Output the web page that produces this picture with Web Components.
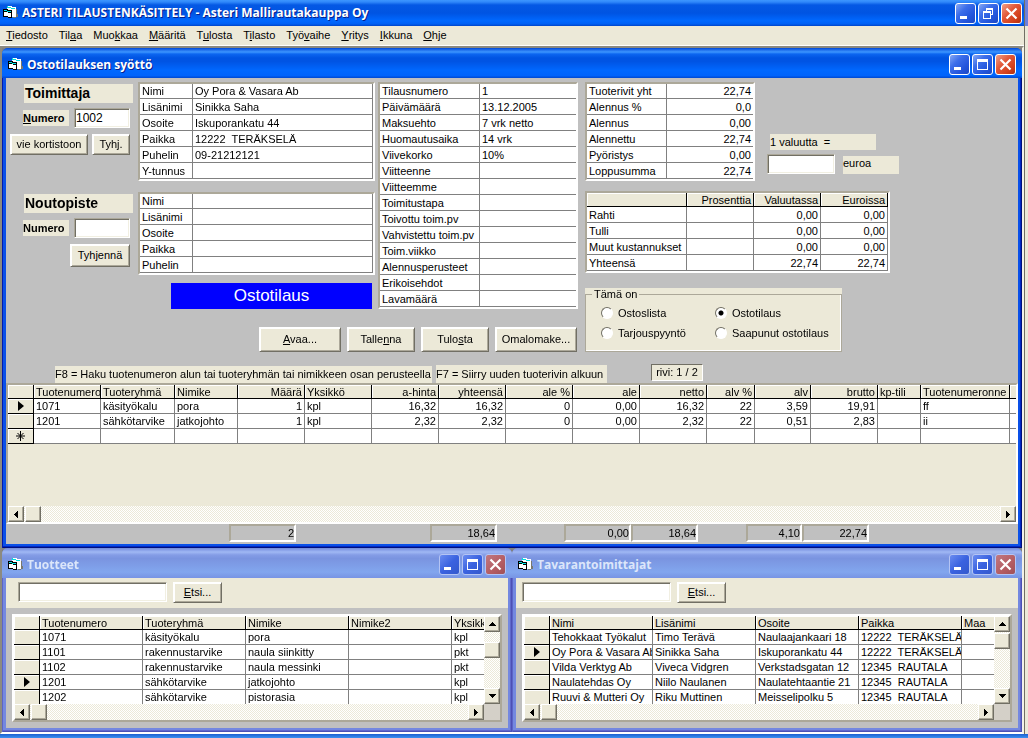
<!DOCTYPE html>
<html lang="fi">
<head>
<meta charset="utf-8">
<title>ASTERI TILAUSTENKÄSITTELY - Asteri Mallirautakauppa Oy</title>
<style>
html, body { margin: 0; height: 100%; }
body {
  font: 11px/13px "Liberation Sans", Arial, sans-serif;
  color: #000;
  background: #ece9d8;
  overflow: hidden;
  --face: #ece9d8;
  --shade: #aca899;
  --dark: #716f64;
  --line: #808080;
  --gray: #c0c0c0;
}
</style>
</head>
<body>
<asteri-app></asteri-app>
<script>
const DATA = {
  supplier: [["Nimi", "Oy Pora & Vasara Ab"], ["Lisänimi", "Sinikka Saha"], ["Osoite", "Iskuporankatu 44"], ["Paikka", "12222  TERÄKSELÄ"], ["Puhelin", "09-21212121"], ["Y-tunnus", ""]],
  pickup: [["Nimi", ""], ["Lisänimi", ""], ["Osoite", ""], ["Paikka", ""], ["Puhelin", ""]],
  order: [["Tilausnumero", "1"], ["Päivämäärä", "13.12.2005"], ["Maksuehto", "7 vrk netto"], ["Huomautusaika", "14 vrk"], ["Viivekorko", "10%"], ["Viitteenne", ""], ["Viitteemme", ""], ["Toimitustapa", ""], ["Toivottu toim.pv", ""], ["Vahvistettu toim.pv", ""], ["Toim.viikko", ""], ["Alennusperusteet", ""], ["Erikoisehdot", ""], ["Lavamäärä", ""]],
  totals: [["Tuoterivit yht", "22,74"], ["Alennus %", "0,0"], ["Alennus", "0,00"], ["Alennettu", "22,74"], ["Pyöristys", "0,00"], ["Loppusumma", "22,74"]]
};

const GRIDS = {
  costs: {
    selector: false,
    cols: [["", 100], ["Prosenttia", 67, "r"], ["Valuutassa", 67, "r"], ["Euroissa", 67, "r"]],
    rows: [["Rahti", "", "0,00", "0,00"], ["Tulli", "", "0,00", "0,00"], ["Muut kustannukset", "", "0,00", "0,00"], ["Yhteensä", "", "22,74", "22,74"]]
  },
  lines: {
    selector: true, current: 0, append: true,
    cols: [["Tuotenumero", 67], ["Tuoteryhmä", 74], ["Nimike", 63], ["Määrä", 67, "r"], ["Yksikkö", 67], ["a-hinta", 67, "r"], ["yhteensä", 67, "r"], ["ale %", 67, "r"], ["ale", 67, "r"], ["netto", 67, "r"], ["alv %", 48, "r"], ["alv", 56, "r"], ["brutto", 67, "r"], ["kp-tili", 43], ["Tuotenumeronne", 89], ["", 0]],
    rows: [
      ["1071", "käsityökalu", "pora", "1", "kpl", "16,32", "16,32", "0", "0,00", "16,32", "22", "3,59", "19,91", "", "ff", ""],
      ["1201", "sähkötarvike", "jatkojohto", "1", "kpl", "2,32", "2,32", "0", "0,00", "2,32", "22", "0,51", "2,83", "", "ii", ""]
    ]
  },
  products: {
    selector: true, current: 3,
    cols: [["Tuotenumero", 103], ["Tuoteryhmä", 103], ["Nimike", 103], ["Nimike2", 103], ["Yksikkö", 0]],
    rows: [["1071", "käsityökalu", "pora", "", "kpl"], ["1101", "rakennustarvike", "naula siinkitty", "", "pkt"], ["1102", "rakennustarvike", "naula messinki", "", "pkt"], ["1201", "sähkötarvike", "jatkojohto", "", "kpl"], ["1202", "sähkötarvike", "pistorasia", "", "kpl"]]
  },
  suppliers: {
    selector: true, current: 1,
    cols: [["Nimi", 103], ["Lisänimi", 103], ["Osoite", 103], ["Paikka", 103], ["Maa", 0]],
    rows: [["Tehokkaat Työkalut", "Timo Terävä", "Naulaajankaari 18", "12222  TERÄKSELÄ", ""], ["Oy Pora & Vasara Ab", "Sinikka Saha", "Iskuporankatu 44", "12222  TERÄKSELÄ", ""], ["Vilda Verktyg Ab", "Viveca Vidgren", "Verkstadsgatan 12", "12345  RAUTALA", ""], ["Naulatehdas Oy", "Niilo Naulanen", "Naulatehtaantie 21", "12345  RAUTALA", ""], ["Ruuvi & Mutteri Oy", "Riku Muttinen", "Meisselipolku 5", "12345  RAUTALA", ""]]
  }
};

const esc = s => s.replace(/&/g, "&amp;");

const FIELD_CSS = `
  input[type=text] {
    box-sizing: border-box; margin: 0; height: 20px; padding: 0 1px; font: inherit; font-size: 12px; color: #000;
    background: #fff; border: 1px solid; border-color: var(--shade) #fff #fff var(--shade); border-radius: 0; outline: none;
    box-shadow: inset 1px 1px var(--dark), inset -1px -1px #f1efe2;
  }`;

function define(name, render, after) {
  customElements.define(name, class extends HTMLElement {
    connectedCallback() {
      if (this.shadowRoot) return;
      this.attachShadow({ mode: "open" }).innerHTML = render(this);
      if (after) after(this, this.shadowRoot);
    }
  });
}

/* Overlapping-forms program icon */
define("form-icon", () => `
  <style>:host { display: block; flex: none; width: 16px; height: 16px; } svg { display: block; }</style>
  <svg width="16" height="16" viewBox="0 0 16 16" shape-rendering="crispEdges" aria-hidden="true">
    <path d="M13 4h1v5h1v3h-2v1h-3v-1h3z" fill="#77776f"/>
    <path d="M4 1h5v1h4v10H9V5H4z" fill="#fff"/>
    <path d="M4 1h1v1h3v1h4v1H8V3H4z" fill="#00dede"/>
    <path d="M0 4h5v1h4v8H5v-1H0z" fill="#000"/>
    <path d="M1 7h4v1h3v4H5v-1H1z" fill="#fff"/>
    <path d="M1 5h3v1h4v1H4V6H1z" fill="#00e8e8"/>
  </svg>`);

/* Title bar buttons: minimise, maximise or restore, close */
define("caption-buttons", el => `
  <style>
    :host { display: flex; gap: 2px; flex: none; }
    button {
      box-sizing: border-box; width: 21px; height: 21px; padding: 0; border: 1px solid #fff; border-radius: 3px;
      background: linear-gradient(135deg, #86a8f4 0, #3c6eea 35%, #2355dc 70%, #1c48c4 100%);
    }
    button.close { background: linear-gradient(135deg, #f0a088 0, #e2593a 40%, #d2401c 75%, #b0300e 100%); }
    :host([dim]) button { border-color: #b4c4f4; background: linear-gradient(135deg, #6a8cf0, #3a62e0 50%, #3358cc); }
    :host([dim]) button.close { background: linear-gradient(135deg, #c07880, #b45c62 60%, #a05058); }
    svg { display: block; }
  </style>
  <button aria-label="Pienennä"><svg width="19" height="19"><path d="M4 12h7v3H4z" fill="#fff"/></svg></button>
  ${el.hasAttribute("restored")
    ? `<button aria-label="Palauta"><svg width="19" height="19" shape-rendering="crispEdges"><path d="M7 4h7v7h-2v-1h1V6H8v1H7z M4 7h8v8H4z M5 9v5h6V9z" fill="#fff" fill-rule="evenodd"/></svg></button>`
    : `<button aria-label="Suurenna"><svg width="19" height="19" shape-rendering="crispEdges"><path d="M4 4h11v11H4z M5 7v7h9V7z" fill="#fff" fill-rule="evenodd"/></svg></button>`}
  <button class="close" aria-label="Sulje"><svg width="19" height="19"><path d="M4.500 4.500l10 10M14.500 4.500l-10 10" stroke="#fff" stroke-width="2.200"/></svg></button>`);

/* Title bar */
define("title-bar", el => `
  <style>
    :host {
      display: flex; align-items: center; box-sizing: border-box; height: 30px; padding: 3px 6px 0 6px; gap: 3px;
      border-radius: 6px 6px 0 0; color: #fff; font: bold 12px/16px "Open Sans", "Noto Sans", sans-serif;
      background: linear-gradient(#0048d8 0, #3d96ff 4px, #0c66f0 6px, #0054e2 10px, #0054e4 45%, #0068ff 75%, #0064fc 92%, #0048d0 100%);
    }
    :host([main]) {
      height: 26px; padding: 0 2px 0 3px; border-radius: 0;
      background: linear-gradient(#3d96ff 0, #3088fa 2px, #0458e4 5px, #0054e2 50%, #0068ff 80%, #0060f4 92%, #0044c8 100%);
    }
    :host([dim]) {
      color: #dce6fa;
      background: linear-gradient(#7088dc 0, #a0b8f4 4px, #849ce6 7px, #7a94e0 35%, #82a6ee 80%, #7894e4 100%);
    }
    h1 { flex: 1; margin: 0; min-width: 0; font: inherit; white-space: nowrap; overflow: hidden; text-shadow: 1px 1px #06208c; }
    :host([dim]) h1 { text-shadow: none; }
  </style>
  <form-icon></form-icon><h1><slot></slot></h1>
  <caption-buttons ${el.hasAttribute("dim") ? "dim" : ""} ${el.hasAttribute("main") ? "restored" : ""}></caption-buttons>`);

/* Child window frame */
define("mdi-window", el => {
  const dim = el.hasAttribute("dim");
  return `
  <style>
    :host {
      display: flex; flex-direction: column; min-width: 0; border-radius: 6px 6px 0 0;
      background: ${dim ? "#7488e0" : "#0a50e8"};
    }
    .body {
      flex: 1; display: flex; flex-direction: column; min-height: 0; padding: 0 4px 4px;
      box-shadow: inset 1px 0 ${dim ? "#5c64c8" : "#0019b0"}, inset -1px -1px ${dim ? "#4c50b4" : "#00107c"}, inset -2px -2px ${dim ? "#6068cc" : "#0028c4"};
    }
    .client { flex: 1; display: flex; flex-direction: column; min-height: 0; background: var(--gray); }
  </style>
  <title-bar ${dim ? "dim" : ""}>${el.getAttribute("heading")}</title-bar>
  <div class="body"><div class="client"><slot></slot></div></div>`;
});

define("menu-bar", () => `
  <style>
    :host { display: block; background: var(--face); border-bottom: 1px solid #fff; }
    nav { display: flex; height: 19px; padding-left: 6px; gap: 11px; line-height: 18px; }
    a { color: #000; text-decoration: none; }
  </style>
  <nav>${["<u>T</u>iedosto", "Til<u>a</u>a", "Muo<u>k</u>kaa", "<u>M</u>ääritä", "T<u>u</u>losta", "T<u>i</u>lasto", "Työ<u>v</u>aihe", "<u>Y</u>ritys", "<u>I</u>kkuna", "<u>O</u>hje"].map(t => `<a href="#">${t}</a>`).join("")}</nav>`);

define("push-button", () => `
  <style>
    :host { display: block; flex: none; }
    button {
      box-sizing: border-box; width: 100%; height: 100%; padding: 0; font: inherit; color: #000; white-space: nowrap;
      background: var(--face); border: 1px solid; border-color: #fff var(--dark) var(--dark) #fff; border-radius: 0;
      box-shadow: inset 1px 1px #fff, inset -1px -1px var(--shade);
    }
  </style>
  <button type="button"><slot></slot></button>`);

/* Two-column table of names and values */
define("record-table", el => `
  <style>
    :host { display: block; box-sizing: border-box; background: #fff; border: 2px solid; border-color: var(--shade) #fff #fff var(--shade); }
    table { width: 100%; border-collapse: separate; border-spacing: 0; table-layout: fixed; }
    th, td { box-sizing: border-box; height: 16px; padding: 1px 2px 0; border-bottom: 1px solid var(--line); font-weight: normal; text-align: left; white-space: pre; overflow: hidden; }
    tr:first-child > * { height: 15px; padding-top: 0; }
    th { width: ${el.getAttribute("name-width")}px; border-right: 1px solid var(--line); }
    :host([closed]) td { border-right: 1px solid var(--line); }
    :host([numeric]) td { text-align: right; }
  </style>
  <table><tbody>${DATA[el.getAttribute("source")].map(([k, v]) => `<tr><th scope="row">${k}</th><td>${esc(v)}</td></tr>`).join("")}</tbody></table>`);

/* Scroll bar with arrow buttons and a thumb */
define("scroll-strip", el => {
  const v = el.hasAttribute("vertical");
  const arrow = d => `<svg width="8" height="8" shape-rendering="crispEdges"><path d="${d}"/></svg>`;
  return `
  <style>
    :host {
      display: flex; flex: none; flex-direction: ${v ? "column" : "row"}; ${v ? "width" : "height"}: 16px;
      background: repeating-conic-gradient(#fff 0 25%, var(--face) 0 50%) 0 0 / 2px 2px;
    }
    button, i {
      box-sizing: border-box; width: 16px; height: 16px; flex: none; padding: 0; display: flex; align-items: center; justify-content: center;
      background: var(--face); border: 1px solid; border-color: #fff var(--dark) var(--dark) #fff; border-radius: 0;
      box-shadow: inset -1px -1px var(--shade);
    }
    i { margin-top: ${v ? el.getAttribute("offset") || 0 : 0}px; ${v ? "" : "margin-left: 1px;"} }
    .end { ${v ? "margin-top" : "margin-left"}: auto; }
  </style>
  <button type="button" aria-label="Edellinen">${arrow(v ? "M4 2h1v1h1v1h1v1h1v1H1V5h1V4h1V3h1z" : "M2 4h1V3h1V2h1V1h1v7H5V7H4V6H3V5H2z")}</button><i></i>
  <button type="button" class="end" aria-label="Seuraava">${arrow(v ? "M1 2h7v1H7v1H6v1H5v1H4V5H3V4H2V3H1z" : "M2 1h1v1h1v1h1v1h1v1H5v1H4v1H3v1H2z")}</button>`;
});

/* Data grid with an optional record selector column */
define("data-grid", el => {
  const g = GRIDS[el.getAttribute("source")];
  const mark = svg => `<svg width="12" height="12" viewBox="0 0 12 12">${svg}</svg>`;
  const pointer = mark(`<path d="M3 1l6 5-6 5z"/>`);
  const star = mark(`<path d="M5.500 1v10M1 6h9M2.500 3l6 6M8.500 3l-6 6" stroke="#000"/>`);
  const cls = i => g.cols[i][2] ? ` class="r"` : "";
  const sel = m => g.selector ? `<th class="sel" scope="row">${m}</th>` : "";
  const rows = g.rows.map((r, n) => `<tr>${sel(n === g.current ? pointer : "")}${r.map((c, i) => `<td${cls(i)}>${esc(c)}</td>`).join("")}</tr>`);
  if (g.append) rows.push(`<tr>${sel(star)}${g.cols.map(() => "<td></td>").join("")}</tr>`);
  return `
  <style>
    :host { display: block; overflow: hidden; --row: ${g.selector ? 15 : 16}px; }
    table { width: 100%; border-collapse: separate; border-spacing: 0; table-layout: fixed; }
    th, td { box-sizing: border-box; padding: 0 2px; font-weight: normal; text-align: left; white-space: pre; overflow: hidden; }
    thead th, .sel { background: var(--face); border-right: 1px solid #000; border-bottom: 1px solid #000; box-shadow: inset 1px 1px #fff; }
    thead th { height: 14px; line-height: 12px; }
    td { height: var(--row); padding-top: ${g.selector ? 0 : 1}px; background: #fff; border-right: 1px solid var(--line); border-bottom: 1px solid var(--line); }
    td.r, th.r { text-align: right; }
    .sel { height: var(--row); padding: 0 0 0 7px; }
    :host([open]) tr > :last-child { border-right: 0; }
    svg { display: block; }
  </style>
  <table>
    <colgroup>${g.selector ? `<col style="width:26px">` : ""}${g.cols.map(c => c[1] ? `<col style="width:${c[1]}px">` : "<col>").join("")}</colgroup>
    <thead><tr>${g.selector ? "<th></th>" : ""}${g.cols.map((c, i) => `<th scope="col"${cls(i)}>${c[0]}</th>`).join("")}</tr></thead>
    <tbody>${rows.join("")}</tbody>
  </table>`;
});

/* Heading, number field and address table of one party */
define("party-panel", el => `
  <style>
    :host { display: grid; grid-template-columns: 132px 237px; align-items: start; }
    .side { display: flex; flex-direction: column; padding-right: 8px; }
    h2 { margin: 2px 0 5px 18px; width: 109px; padding-left: 1px; box-sizing: border-box; background: var(--face); font: bold 14px/19px "Liberation Sans", Arial, sans-serif; }
    .num { display: flex; align-items: center; justify-content: flex-end; gap: 5px; }
    label { width: 46px; background: var(--face); font-weight: bold; line-height: 16px; }
    ${FIELD_CSS}
    input[type=text] { width: 56px; }
    .acts { display: flex; justify-content: flex-end; gap: 4px; margin-top: 6px; }
  </style>
  <div class="side">
    <h2>${el.getAttribute("heading")}</h2>
    <div class="num"><label for="n">${el.hasAttribute("mnemonic") ? "<u>N</u>umero" : "Numero"}</label><input type="text" id="n" value="${el.getAttribute("value") || ""}"></div>
    <div class="acts"><slot></slot></div>
  </div>
  <record-table source="${el.getAttribute("source")}" name-width="53" closed></record-table>`,
(el, root) => {
  const field = root.querySelector("input");
  if (!field.value) return;
  field.focus();
  field.setSelectionRange(field.value.length, field.value.length);
});

define("currency-rate", () => `
  <style>
    :host { display: block; }
    p { margin: 0 0 4px 3px; width: 106px; background: var(--face); line-height: 16px; white-space: pre; }
    .row { display: flex; align-items: flex-end; gap: 8px; }
    label { width: 56px; background: var(--face); line-height: 15px; padding: 0 0 3px; box-sizing: border-box; }
    ${FIELD_CSS}
    input[type=text] { width: 68px; }
  </style>
  <p>1 valuutta  =</p>
  <div class="row"><input type="text" id="rate"><label for="rate">euroa</label></div>`);

define("order-kind", () => `
  <style>
    :host { display: block; width: 257px; background: var(--face); }
    fieldset {
      box-sizing: border-box; height: 64px; margin: 0; padding: 0 0 0 15px; min-width: 0; border: 1px solid var(--shade);
      box-shadow: inset 0 -1px #fff, inset -1px 0 #fff;
    }
    legend { margin-left: -9px; padding: 0 2px; line-height: 13px; }
    .opts { display: grid; grid-template-columns: 114px 1fr; grid-auto-rows: 20px; align-items: center; padding-top: 2px; }
    label { display: flex; align-items: center; gap: 5px; white-space: nowrap; }
    input {
      appearance: none; box-sizing: border-box; width: 12px; height: 12px; margin: 0; border-radius: 50%;
      border: 1px solid; border-color: var(--dark) #fff #fff var(--dark); background: #fff; outline: none;
    }
    input:checked { background: radial-gradient(circle, #000 0 2px, #fff 3px); }
  </style>
  <fieldset><legend>Tämä on</legend><div class="opts">
    <label><input type="radio" name="k">Ostoslista</label><label><input type="radio" name="k" checked>Ostotilaus</label>
    <label><input type="radio" name="k">Tarjouspyyntö</label><label><input type="radio" name="k">Saapunut ostotilaus</label>
  </div></fieldset>`);

/* Purchase order entry form */
define("order-form", () => `
  <style>
    :host { display: flex; flex: 1; flex-direction: column; min-height: 0; }
    .form { display: grid; grid-template-columns: 369px 203px 1fr; padding-top: 4px; }
    .left { display: flex; flex-direction: column; }
    .pickup { margin-top: 11px; }
    .banner { width: 201px; margin: 8px 3px 0 auto; background: #0000ff; color: #fff; font-size: 17px; line-height: 26px; text-align: center; }
    .order { margin-left: 3px; align-self: start; }
    .acts { grid-column: 1 / 3; display: flex; justify-content: flex-end; gap: 6px; margin-top: 18px; padding-right: 1px; }
    .acts push-button { height: 25px; width: 68px; }
    .acts .wide { width: 82px; }
    .right { grid-column: 3; grid-row: 1 / 3; padding-left: 7px; }
    .top { display: flex; align-items: flex-end; gap: 12px; }
    .top record-table { width: 170px; }
    .top currency-rate { margin-bottom: 7px; }
    .costs { width: 305px; box-sizing: border-box; margin: 10px 0 15px; background: #fff; border: 2px solid; border-color: var(--shade) #fff #fff var(--shade); }
    .hints { display: flex; align-items: flex-end; margin-top: 12px; padding-left: 49px; white-space: nowrap; }
    .hints span { background: var(--face); }
    .f8 { width: 377px; line-height: 17px; margin-right: 4px; }
    .f7 { width: 171px; line-height: 18px; margin-right: 44px; }
    .hints output { box-sizing: border-box; width: 52px; margin-bottom: 2px; line-height: 15px; text-align: center; background: var(--face); border: 1px solid; border-color: var(--dark) #fff #fff var(--dark); }
    .lines { flex: 1; display: flex; flex-direction: column; min-height: 0; background: var(--face); border: 2px solid; border-color: var(--shade) #fff #fff var(--shade); }
    .lines data-grid { flex: 1; }
    .sums { display: flex; height: 20px; padding-left: 223px; }
    .sums output { box-sizing: border-box; width: 67px; height: 18px; line-height: 14px; text-align: right; border: 2px solid; border-color: var(--shade) #fff #fff var(--shade); margin-right: var(--skip, 0px); }
  </style>
  <div class="form">
    <div class="left">
      <party-panel heading="Toimittaja" source="supplier" value="1002" mnemonic><push-button style="width:78px;height:21px">vie kortistoon</push-button><push-button style="width:38px;height:21px">Tyhj.</push-button></party-panel>
      <party-panel class="pickup" heading="Noutopiste" source="pickup"><push-button style="width:60px;height:23px">Tyhjennä</push-button></party-panel>
      <div class="banner">Ostotilaus</div>
    </div>
    <record-table class="order" source="order" name-width="100"></record-table>
    <div class="right">
      <div class="top"><record-table source="totals" name-width="80" numeric></record-table><currency-rate></currency-rate></div>
      <div class="costs"><data-grid source="costs"></data-grid></div>
      <order-kind></order-kind>
    </div>
    <div class="acts">
      <push-button class="wide"><u>A</u>vaa...</push-button><push-button>Talle<u>n</u>na</push-button><push-button>Tulo<u>s</u>ta</push-button><push-button class="wide">Omalomake...</push-button>
    </div>
  </div>
  <div class="hints"><span class="f8">F8 = Haku tuotenumeron alun tai tuoteryhmän tai nimikkeen osan perusteella</span><span class="f7">F7 = Siirry uuden tuoterivin alkuun</span><output>rivi: 1 / 2</output></div>
  <div class="lines"><data-grid source="lines" open></data-grid><scroll-strip></scroll-strip></div>
  <div class="sums"><output style="--skip:134px">2</output><output style="--skip:67px">18,64</output><output>0,00</output><output style="--skip:48px">18,64</output><output style="width:56px">4,10</output><output>22,74</output></div>`);

/* Search field above a scrolling grid */
define("browse-list", el => `
  <style>
    :host { display: block; }
    .find { display: flex; gap: 6px; height: 30px; box-sizing: border-box; padding: 4px 0 0 ${el.getAttribute("inset")}px; background: var(--face); }
    ${FIELD_CSS}
    .find input { width: 149px; }
    push-button { width: 49px; height: 21px; }
    .frame { margin: 6px; border: 2px solid; border-color: #fff var(--shade) var(--shade) #fff; display: grid; grid-template-columns: minmax(0, 1fr) 16px; grid-template-rows: 88px 16px; }
    .corner { background: #d4d0c8; }
  </style>
  <div class="find"><input type="text" aria-label="Hakusana"><push-button><u>E</u>tsi...</push-button></div>
  <div class="frame">
    <data-grid source="${el.getAttribute("source")}" open></data-grid>
    <scroll-strip vertical offset="${el.getAttribute("offset")}"></scroll-strip>
    <scroll-strip></scroll-strip><div class="corner"></div>
  </div>`);

/* Application frame */
define("asteri-app", () => `
  <style>
    :host { display: grid; grid-template-columns: minmax(0, 1fr) 4px; grid-template-rows: minmax(0, 1fr) 4px; height: 100vh; }
    .app { display: flex; flex-direction: column; min-height: 0; }
    .desk { flex: 1; min-height: 0; display: flex; flex-direction: column; background: #808080; border: 2px solid; border-color: #8c8a80 #f4f2e8 #fff #8c8a80; }
    .entry { flex: 1; min-height: 0; }
    .pair { display: grid; grid-template-columns: 1fr 1fr; }
    .edge { border-left: 1px solid var(--dark); background: linear-gradient(#6c80dc 0 26px, var(--face) 26px); }
    .task { grid-column: 1 / 3; background: linear-gradient(#1c60d0, #3c90f0); }
  </style>
  <div class="app">
    <title-bar main>ASTERI TILAUSTENKÄSITTELY - Asteri Mallirautakauppa Oy</title-bar>
    <menu-bar></menu-bar>
    <div class="desk">
      <mdi-window class="entry" heading="Ostotilauksen syöttö"><order-form></order-form></mdi-window>
      <div class="pair">
        <mdi-window dim heading="Tuotteet"><browse-list source="products" inset="12" offset="10"></browse-list></mdi-window>
        <mdi-window dim heading="Tavarantoimittajat"><browse-list source="suppliers" inset="6" offset="1"></browse-list></mdi-window>
      </div>
    </div>
  </div>
  <div class="edge"></div>
  <div class="task"></div>`);
</script>
</body>
</html>
